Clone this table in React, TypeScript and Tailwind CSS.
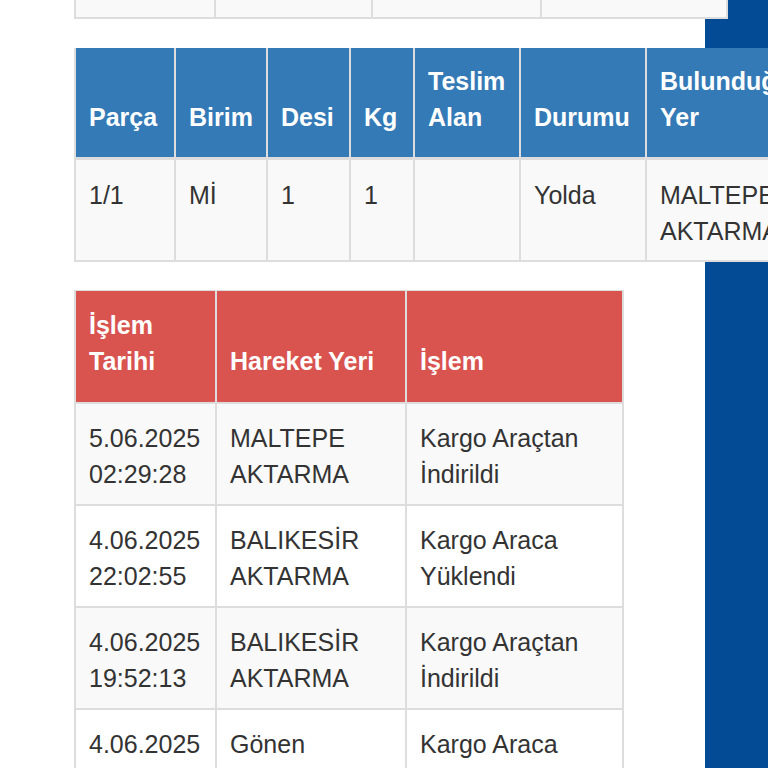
import React from "react";

const topCols = [140, 157, 169, 186];

const partCols = [
  { w: "w-[100px]", label: ["Parça"], value: ["1/1"] },
  { w: "w-[92px]", label: ["Birim"], value: ["Mİ"] },
  { w: "w-[83px]", label: ["Desi"], value: ["1"] },
  { w: "w-[64px]", label: ["Kg"], value: ["1"] },
  { w: "w-[106px]", label: ["Teslim", "Alan"], value: [] },
  { w: "w-[126px]", label: ["Durumu"], value: ["Yolda"] },
  { w: "w-[190px]", label: ["Bulunduğu", "Yer"], value: ["MALTEPE", "AKTARMA"] },
];

const moveWidths = ["w-[141px]", "w-[190px]", "w-[217px]"];

const moves = [
  [["5.06.2025", "02:29:28"], ["MALTEPE", "AKTARMA"], ["Kargo Araçtan", "İndirildi"]],
  [["4.06.2025", "22:02:55"], ["BALIKESİR", "AKTARMA"], ["Kargo Araca", "Yüklendi"]],
  [["4.06.2025", "19:52:13"], ["BALIKESİR", "AKTARMA"], ["Kargo Araçtan", "İndirildi"]],
  [["4.06.2025", "16:40:02"], ["Gönen"], ["Kargo Araca", "Yüklendi"]],
];

function Lines({ text }: { text: string[] }) {
  return (
    <>
      {text.map((t, i) => (
        <div key={i} className="whitespace-nowrap">
          {t}
        </div>
      ))}
    </>
  );
}

export default function App() {
  return (
    <div className="h-[768px] w-[768px] overflow-hidden bg-[#034b95] font-['Liberation_Sans',Arial,sans-serif] text-[25px] leading-[36px] text-[#333]">
      <div className="h-full w-[705px] bg-white">
        {/* tail of the table above */}
        <div className="ml-[74px] flex h-[19px] w-max border-b-2 border-l-2 border-[#ddd]">
          {topCols.map((w, i) => (
            <div key={i} style={{ width: w }} className="h-full border-r-2 border-[#ddd] bg-[#f9f9f9]" />
          ))}
        </div>

        {/* parça table */}
        <div className="ml-[74px] mt-[29px] w-max border-l-2 border-[#ddd]">
          <div className="flex h-[112px] border-b-[3px] border-[#ddd] bg-[#337ab7] font-bold text-white">
            {partCols.map((c, i) => (
              <div
                key={i}
                className={`${c.w} flex flex-col justify-end border-r-2 border-[#ddd] pb-[22px] pl-[13px]`}
              >
                <Lines text={c.label} />
              </div>
            ))}
          </div>
          <div className="flex h-[102px] border-b-2 border-[#ddd] bg-[#f9f9f9]">
            {partCols.map((c, i) => (
              <div key={i} className={`${c.w} border-r-2 border-[#ddd] pl-[13px] pt-[17px]`}>
                <Lines text={c.value} />
              </div>
            ))}
          </div>
        </div>

        {/* hareket table */}
        <div className="ml-[74px] mt-[28px] w-max border-l-2 border-t border-[#ddd]">
          <div className="flex h-[113px] border-b-2 border-[#ddd] bg-[#d9534f] font-bold text-white">
            {[["İşlem", "Tarihi"], ["Hareket Yeri"], ["İşlem"]].map((l, i) => (
              <div
                key={i}
                className={`${moveWidths[i]} flex flex-col justify-end border-r-2 border-[#ddd] pb-[23px] pl-[13px]`}
              >
                <Lines text={l} />
              </div>
            ))}
          </div>
          {moves.map((row, r) => (
            <div
              key={r}
              className={`flex h-[102px] border-b-2 border-[#ddd] ${r % 2 === 0 ? "bg-[#f9f9f9]" : "bg-white"}`}
            >
              {row.map((cell, i) => (
                <div key={i} className={`${moveWidths[i]} border-r-2 border-[#ddd] pl-[13px] pt-[16px]`}>
                  <Lines text={cell} />
                </div>
              ))}
            </div>
          ))}
        </div>
      </div>
    </div>
  );
}
